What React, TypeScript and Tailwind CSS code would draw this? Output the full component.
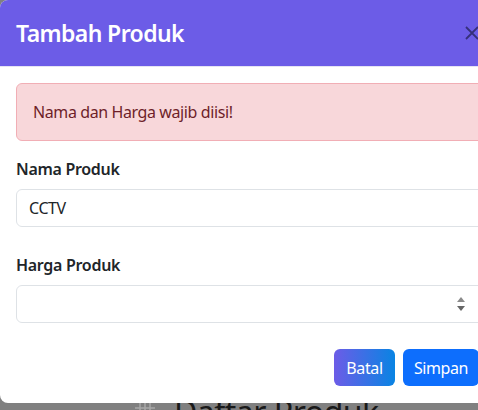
import React from "react";

export default function App() {
  return (
    <div
      className="relative w-[478px] h-[410px] overflow-hidden bg-[#808080]"
      style={{ fontFamily: '"Noto Sans", "Open Sans", sans-serif' }}
    >
      {/* background page (dimmed) */}
      <div className="absolute left-[132px] top-[390px] flex items-center gap-[16px]">
        <svg width="26" height="26" viewBox="0 0 26 26" className="mt-[2px]">
          <g stroke="#a9a9a9" strokeWidth="1.5" fill="none">
            <line x1="3" y1="8" x2="23" y2="8" />
            <line x1="3" y1="14" x2="23" y2="14" />
            <line x1="8" y1="3" x2="8" y2="23" />
            <line x1="13" y1="3" x2="13" y2="23" />
            <line x1="18" y1="3" x2="18" y2="23" />
          </g>
        </svg>
        <span className="text-[32px] leading-[44px] text-[#1a1a1a] tracking-[-0.5px]">Daftar Produk</span>
      </div>

      {/* modal */}
      <div className="absolute left-0 top-0 w-[500px] h-[403px] bg-white rounded-[8px] overflow-hidden flex flex-col">
        <div className="h-[67px] bg-[#6c5ce7] border-b border-[#e5e4f3] flex items-center justify-between pl-[16px] pr-[16px] shrink-0">
          <h5 className="text-[23px] leading-[30px] font-semibold text-white tracking-[-0.6px]">Tambah Produk</h5>
          <svg width="16" height="16" viewBox="0 0 16 16" className="mr-[4px]">
            <path d="M2 2 L14 14 M14 2 L2 14" stroke="#36307a" strokeWidth="1.8" />
          </svg>
        </div>
        <div className="px-[16px] pt-[16px] pb-[16px] text-[#212529] tracking-[-0.4px]">
          <div className="h-[58px] border border-[#f1aeb5] bg-[#f8d7da] rounded-[6px] px-[16px] flex items-center text-[16px] text-[#6e1f29]">
            Nama dan Harga wajib diisi!
          </div>
          <div className="mt-[16px]">
            <label className="block text-[16px] leading-[24px] font-semibold mb-[8px] tracking-[-0.3px]">Nama Produk</label>
            <input
              type="text"
              defaultValue="CCTV"
              className="block w-full h-[38px] border border-[#dee2e6] rounded-[6px] px-[12px] text-[16px] text-[#212529] outline-none tracking-[-0.4px]"
            />
          </div>
          <div className="mt-[26px]">
            <label className="block text-[16px] leading-[24px] font-semibold mb-[8px] tracking-[-0.3px]">Harga Produk</label>
            <div className="relative">
              <input
                type="text"
                className="block w-full h-[38px] border border-[#dee2e6] rounded-[6px] px-[12px] text-[16px] outline-none"
              />
              <svg width="10" height="18" viewBox="0 0 10 18" className="absolute left-[440px] top-[10px]">
                <path d="M1 7 L5 2 L9 7 Z" fill="#8a8a8a" />
                <path d="M1 11 L5 16 L9 11 Z" fill="#666666" />
              </svg>
            </div>
          </div>
        </div>
        <div className="flex justify-end gap-[8px] pr-[21px] pt-[10px] tracking-[-0.4px]">
          <button className="h-[37px] w-[61px] rounded-[6px] text-white text-[16px] bg-[linear-gradient(to_right,#6c5ce7,#0984e3)]">
            Batal
          </button>
          <button className="h-[37px] w-[76px] rounded-[6px] text-white text-[16px] bg-[#0d6efd]">
            Simpan
          </button>
        </div>
      </div>
    </div>
  );
}
